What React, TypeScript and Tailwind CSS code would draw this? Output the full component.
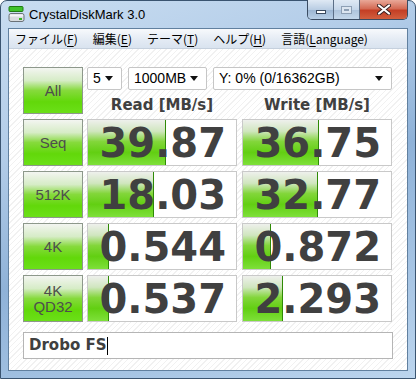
import React from "react"

const rows = [
  { label: ["Seq"], read: "39.87", readBar: 78, write: "36.75", writeBar: 76 },
  { label: ["512K"], read: "18.03", readBar: 66, write: "32.77", writeBar: 75 },
  { label: ["4K"], read: "0.544", readBar: 21, write: "0.872", writeBar: 28 },
  { label: ["4K", "QD32"], read: "0.537", readBar: 21, write: "2.293", writeBar: 40 },
]

function GreenButton({ lines }: { lines: string[] }) {
  return (
    <div className="w-[60px] h-[47px] shrink-0 border border-[#8d988b] bg-[linear-gradient(to_bottom,#f3f5f1_0%,#d6ecc6_28%,#86da3c_50%,#62d80a_75%,#6be018_100%)] flex flex-col items-center justify-center font-['Liberation_Sans',sans-serif] text-[15px] leading-[16px] text-[#4d4d4d]">
      {lines.map((l) => (
        <span key={l}>{l}</span>
      ))}
    </div>
  )
}

function Cell({ value, bar }: { value: string; bar: number }) {
  return (
    <div className="relative w-[150px] h-[47px] shrink-0 border border-[#c9c9c9] bg-white overflow-hidden">
      <div
        className="absolute left-0 top-0 bottom-0 border-r border-[#2f8a06] bg-[linear-gradient(to_bottom,#eef0ec_0%,#d0e6bf_25%,#82d63a_48%,#62cf12_72%,#7ee03a_100%)]"
        style={{ width: bar }}
      />
      <div className="relative h-full flex items-center justify-end pr-[10px] font-['DejaVu_Sans',sans-serif] font-bold text-[40px] leading-none text-[#404040]">
        {value}
      </div>
    </div>
  )
}

function Combo({ text, w }: { text: string; w: string }) {
  return (
    <div className={`${w} h-[23px] shrink-0 border border-[#c6c6c6] rounded-[2px] bg-white flex items-center justify-between pl-[5px] pr-[8px] font-['Liberation_Sans',sans-serif] text-[14px] text-black`}>
      <span>{text}</span>
      <svg width="8" height="5" viewBox="0 0 8 5"><path d="M0 0h8L4 5z" fill="#111" /></svg>
    </div>
  )
}

function MenuItem({ pre, key1, post }: { pre: string; key1: string; post: string }) {
  return (
    <span>
      {pre}
      <span className="underline underline-offset-2">{key1}</span>
      {post}
    </span>
  )
}

export default function App() {
  return (
    <div className="w-[416px] h-[379px] overflow-hidden bg-white">
      <div className="w-[416px] h-[379px] rounded-t-[7px] border border-[#3a5470] bg-[linear-gradient(160deg,#c9ddf1_0%,#b2cce8_30%,#8fb2d8_55%,#a7c5e4_80%,#bcd5ee_100%)] flex flex-col px-[7px] pb-[7px]">
        {/* title bar */}
        <div className="h-[27px] flex items-start justify-between">
          <div className="h-[27px] flex items-center">
            <svg width="17" height="17" viewBox="0 0 17 17">
              <rect x="1" y="0.5" width="14" height="5" rx="1" fill="#3fc22a" stroke="#1f7a12" />
              <rect x="1" y="7.5" width="15" height="8" rx="2" fill="#d8dcdf" stroke="#6b7278" />
              <rect x="2" y="8.5" width="13" height="2" fill="#f4f6f7" />
              <rect x="11" y="12" width="3" height="2" fill="#35b522" />
            </svg>
            <span className="ml-[4px] font-['Liberation_Sans',sans-serif] text-[13px] text-black">CrystalDiskMark 3.0</span>
          </div>
          <div className="-mt-px flex h-[20px] rounded-b-[5px] border border-t-0 border-[#3b4c62] overflow-hidden">
            <div className="w-[26px] h-full bg-[linear-gradient(to_bottom,#dfe9f4,#b9cde3_50%,#9bb5d2_51%,#b8cfe6)] flex items-center justify-center border-r border-[#5b6e86]">
              <div className="w-[10px] h-[4px] mt-[5px] bg-white border border-[#3a4a5e]" />
            </div>
            <div className="w-[26px] h-full bg-[linear-gradient(to_bottom,#dfe9f4,#c5d6e9_50%,#adc3db_51%,#c4d7ea)] flex items-center justify-center border-r border-[#5b6e86]">
              <div className="w-[11px] h-[8px] border border-[#8d9fb4] bg-[#dbe5f0] flex items-center justify-center">
                <div className="w-[5px] h-[2px] border border-[#8d9fb4]" />
              </div>
            </div>
            <div className="w-[47px] h-full bg-[linear-gradient(to_bottom,#e9a898,#d46b55_45%,#c43f25_55%,#d25f3e)] flex items-center justify-center">
              <svg width="14" height="11" viewBox="0 0 14 11">
                <path d="M2 1.5l10 8M12 1.5l-10 8" stroke="#3a2020" strokeWidth="4" strokeLinecap="round" />
                <path d="M2 1.5l10 8M12 1.5l-10 8" stroke="#ffffff" strokeWidth="2.2" strokeLinecap="round" />
              </svg>
            </div>
          </div>
        </div>

        {/* client area */}
        <div className="flex-1 flex flex-col border border-[#61809f] bg-white">
          <div className="h-[20px] shrink-0 border-b border-[#c5d0dd] bg-[linear-gradient(to_bottom,#f7f9fc,#e4ebf4_55%,#d9e3ef)] flex items-center gap-[15px] pl-[6px] font-['Noto_Sans_CJK_JP',sans-serif] text-[12px] leading-none text-black">
            <MenuItem pre="ファイル(" key1="F" post=")" />
            <MenuItem pre="編集(" key1="E" post=")" />
            <MenuItem pre="テーマ(" key1="T" post=")" />
            <MenuItem pre="ヘルプ(" key1="H" post=")" />
            <MenuItem pre="言語(" key1="L" post="anguage)" />
          </div>

          <div className="flex-1 flex flex-col pl-[14px] pt-[18px] bg-[repeating-linear-gradient(135deg,#ffffff_0px,#ffffff_3px,#f1f1f1_3px,#f1f1f1_4px)]">
            {/* top row */}
            <div className="flex">
              <GreenButton lines={["All"]} />
              <div className="ml-[4px] flex flex-col">
                <div className="flex gap-[6px]">
                  <Combo text="5" w="w-[35px]" />
                  <Combo text="1000MB" w="w-[79px]" />
                  <Combo text="Y: 0% (0/16362GB)" w="w-[179px]" />
                </div>
                <div className="flex mt-[6px] font-['DejaVu_Sans',sans-serif] font-bold text-[15px] leading-[18px] text-[#404040]">
                  <div className="w-[150px] text-center">Read [MB/s]</div>
                  <div className="w-[150px] ml-[5px] text-center">Write [MB/s]</div>
                </div>
              </div>
            </div>

            {/* result rows */}
            <div className="flex flex-col gap-[5px] mt-[5px]">
              {rows.map((r) => (
                <div key={r.label.join()} className="flex">
                  <GreenButton lines={r.label} />
                  <div className="ml-[4px]">
                    <Cell value={r.read} bar={r.readBar} />
                  </div>
                  <div className="ml-[5px]">
                    <Cell value={r.write} bar={r.writeBar} />
                  </div>
                </div>
              ))}
            </div>

            {/* comment box */}
            <div className="mt-[10px] w-[370px] h-[27px] border border-[#b5b5b5] bg-white flex items-center pl-[5px] font-['DejaVu_Sans',sans-serif] font-bold text-[15px] text-[#404040]">
              <span>Drobo FS</span>
              <span className="w-px h-[18px] bg-black ml-px" />
            </div>
          </div>
        </div>
      </div>
    </div>
  )
}
